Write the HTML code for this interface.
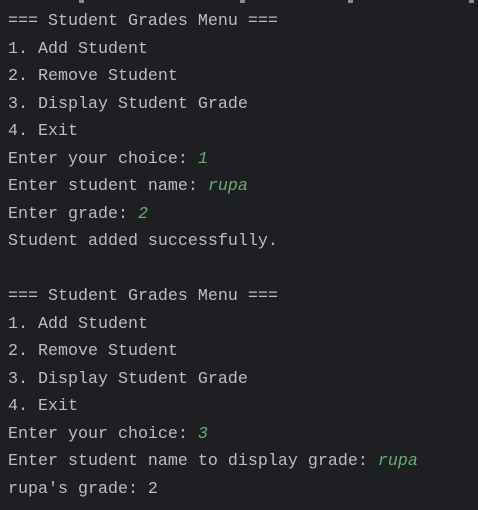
<!DOCTYPE html>
<html><head><meta charset="utf-8"><style>
html,body{margin:0;padding:0;width:478px;height:510px;background:#1e1f22;overflow:hidden}
pre{margin:0;position:absolute;left:8px;top:8px;font-family:"Liberation Mono",monospace;font-size:16.67px;line-height:27.5px;color:#bcbec4}
i{color:#6aab73}
.g{position:absolute;top:0;height:3px;width:5px;background:#8a8c91}
</style></head><body>
<div class="g" style="left:79px"></div><div class="g" style="left:240px"></div><div class="g" style="left:348px"></div><div class="g" style="left:469px"></div>
<pre>=== Student Grades Menu ===
1. Add Student
2. Remove Student
3. Display Student Grade
4. Exit
Enter your choice: <i>1</i>
Enter student name: <i>rupa</i>
Enter grade: <i>2</i>
Student added successfully.

=== Student Grades Menu ===
1. Add Student
2. Remove Student
3. Display Student Grade
4. Exit
Enter your choice: <i>3</i>
Enter student name to display grade: <i>rupa</i>
rupa's grade: 2</pre>
</body></html>
